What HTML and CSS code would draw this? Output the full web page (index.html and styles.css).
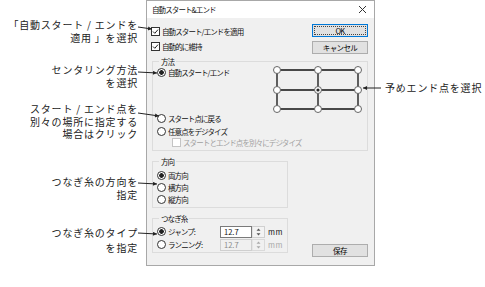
FILE: index.html
```html
<!DOCTYPE html>
<html lang="ja">
  <head>
    <meta charset="UTF-8" />
    <title>自動スタート&amp;エンド</title>
    <link rel="stylesheet" href="styles.css">
  </head>
  <body>
    <div class="figure">
      <p class="note note-apply">「自動スタート / エンドを<br />適用 」を選択</p>
      <p class="note note-method">センタリング方法<br />を選択</p>
      <p class="note note-split">スタート / エンド点を<br />別々の場所に指定する<br />場合はクリック</p>
      <p class="note note-dir">つなぎ糸の方向を<br />指定</p>
      <p class="note note-type">つなぎ糸のタイプ<br />を指定</p>
      <p class="note note-preset">予めエンド点を選択</p>

      <div class="dialog">
        <div class="titlebar">
          <span>自動スタート&amp;エンド</span>
          <svg class="close" width="9" height="9" viewBox="0 0 9 9">
            <path d="M1 1L8 8M8 1L1 8" stroke="#333" stroke-width="1" />
          </svg>
        </div>

        <div class="content">
          <div class="top">
            <div class="checks">
              <div class="row">
                <svg class="cb" width="9" height="9" viewBox="0 0 9 9"><rect x="0.5" y="0.5" width="8" height="8" fill="#fff" stroke="#333" /><path d="M2 4.5L3.8 6.3L7 2.6" fill="none" stroke="#222" stroke-width="1" /></svg>
                <span>自動スタート/エンドを適用</span>
              </div>
              <div class="row">
                <svg class="cb" width="9" height="9" viewBox="0 0 9 9"><rect x="0.5" y="0.5" width="8" height="8" fill="#fff" stroke="#333" /><path d="M2 4.5L3.8 6.3L7 2.6" fill="none" stroke="#222" stroke-width="1" /></svg>
                <span>自動的に維持</span>
              </div>
            </div>
            <div class="buttons">
              <button class="btn btn-default">OK</button>
              <button class="btn">キャンセル</button>
            </div>
          </div>

          <fieldset class="group group-method">
            <legend>方法</legend>
            <div class="method-top">
              <div class="row r-first"><span class="radio on"></span><span>自動スタート/エンド</span></div>
              <svg class="points" width="92" height="50" viewBox="0 0 92 50">
                <g stroke="#111" stroke-width="1.3">
                  <path d="M4 5H85M4 25H85M4 44H85" />
                  <path d="M4 5V44M45 5V44M85 5V44" />
                </g>
                <g fill="#fff" stroke="#666" stroke-width="1">
                  <circle cx="4" cy="5" r="3.5" />
                  <circle cx="45" cy="5" r="3.5" />
                  <circle cx="85" cy="5" r="3.5" />
                  <circle cx="4" cy="25" r="3.5" />
                  <circle cx="45" cy="25" r="3.5" />
                  <circle cx="85" cy="25" r="3.5" />
                  <circle cx="4" cy="44" r="3.5" />
                  <circle cx="45" cy="44" r="3.5" />
                  <circle cx="85" cy="44" r="3.5" />
                </g>
                <circle cx="45" cy="25" r="1.6" fill="#222" />
              </svg>
            </div>
            <div class="row r-back"><span class="radio"></span><span>スタート点に戻る</span></div>
            <div class="row r-any"><span class="radio"></span><span>任意点をデジタイズ</span></div>
            <div class="row r-sub disabled">
              <svg class="cb" width="9" height="9" viewBox="0 0 9 9"><rect x="0.5" y="0.5" width="8" height="8" fill="#fff" stroke="#c4c4c4" /></svg>
              <span>スタートとエンド点を別々にデジタイズ</span>
            </div>
          </fieldset>

          <div class="lower">
            <div class="lower-left">
              <fieldset class="group group-dir">
                <legend>方向</legend>
                <div class="row r-dir"><span class="radio on"></span><span>両方向</span></div>
                <div class="row r-dir"><span class="radio"></span><span>横方向</span></div>
                <div class="row r-dir"><span class="radio"></span><span>縦方向</span></div>
              </fieldset>

              <fieldset class="group group-type">
                <legend>つなぎ糸</legend>
                <div class="row r-type">
                  <span class="radio on"></span><span class="type-label">ジャンプ:</span>
                  <span class="num">12.7</span>
                  <svg class="spin" width="13" height="12" viewBox="0 0 13 12"><rect x="0" y="0.5" width="12.5" height="11" fill="#f3f3f3" stroke="#d0d0d0" /><path d="M6.5 2.5L8.5 4.8H4.5z M6.5 9.5L8.5 7.2H4.5z" fill="#555" /></svg>
                  <span class="unit">mm</span>
                </div>
                <div class="row r-type off">
                  <span class="radio"></span><span class="type-label">ランニング:</span>
                  <span class="num">12.7</span>
                  <svg class="spin" width="13" height="12" viewBox="0 0 13 12"><rect x="0" y="0.5" width="12.5" height="11" fill="#f0f0f0" stroke="#dadada" /><path d="M6.5 2.5L8.5 4.8H4.5z M6.5 9.5L8.5 7.2H4.5z" fill="#aaa" /></svg>
                  <span class="unit">mm</span>
                </div>
              </fieldset>
            </div>
            <button class="btn btn-save">保存</button>
          </div>
        </div>
      </div>

      <svg class="arrows" width="485" height="287" viewBox="0 0 485 287">
        <defs>
          <marker id="head" viewBox="0 0 6 6" refX="6" refY="3" markerWidth="5" markerHeight="4" orient="auto">
            <path d="M0 0L6 3L0 6z" fill="#222" />
          </marker>
        </defs>
        <g stroke="#222" stroke-width="1" marker-end="url(#head)">
          <path d="M138 27L152 29" />
          <path d="M138 72L157 73" />
          <path d="M138 113L159 116" />
          <path d="M138 183L157 184" />
          <path d="M138 233L157 234" />
          <path d="M381 88L363 88" />
        </g>
      </svg>
    </div>
  </body>
</html>
```

FILE: styles.css
```css
* {
  box-sizing: border-box;
}
body {
  margin: 0;
  background: #fff;
  font-family: "Noto Sans CJK JP", "Noto Sans", sans-serif;
}
.figure {
  position: relative;
  width: 485px;
  height: 287px;
}

/* callouts */
.note {
  position: absolute;
  margin: 0;
  font-size: 10px;
  line-height: 13px;
  letter-spacing: 0.8px;
  color: #222;
  white-space: nowrap;
}
.note-apply,
.note-method,
.note-split,
.note-dir,
.note-type {
  right: 347px;
  text-align: right;
}
.note-apply { top: 18px; }
.note-method { top: 63px; }
.note-split { top: 103px; line-height: 12.5px; }
.note-dir { top: 175px; }
.note-type { top: 225px; line-height: 15px; }
.note-preset {
  left: 385px;
  top: 81px;
}
.arrows {
  position: absolute;
  left: 0;
  top: 0;
  pointer-events: none;
}

/* dialog */
.dialog {
  margin-left: 146px;
  width: 229px;
  height: 266px;
  border: 1px solid #a8a8a8;
  background: #f0f0f0;
  font-size: 7.5px;
  letter-spacing: -0.9px;
  color: #111;
}
.titlebar {
  height: 17px;
  background: #fff;
  display: flex;
  align-items: center;
  justify-content: space-between;
  padding: 0 7px 0 5px;
}
.content {
  padding: 6px 6px 0 4px;
}
.top {
  display: flex;
  justify-content: space-between;
  height: 31px;
}
.row {
  display: flex;
  align-items: center;
  gap: 2px;
  white-space: nowrap;
}
.checks .row {
  height: 15px;
}
.buttons {
  display: flex;
  flex-direction: column;
  gap: 4px;
}
.btn {
  width: 56px;
  height: 13px;
  padding: 0;
  background: #e1e1e1;
  border: 1px solid #adadad;
  font-family: inherit;
  font-size: 7.5px;
  letter-spacing: -0.6px;
  line-height: 11px;
  color: #000;
}
.btn-default {
  border-color: #0078d7;
  outline: 1px dotted #444;
  outline-offset: -3px;
}

.radio {
  flex: none;
  width: 9px;
  height: 9px;
  border: 1px solid #333;
  border-radius: 50%;
  background: #fff;
}
.radio.on {
  background: radial-gradient(circle, #222 0 2px, #fff 2.6px);
}
.cb {
  flex: none;
}

.group {
  margin: 0 0 0 1px;
  padding: 0 2px 2px 4px;
  border: 1px solid #dcdcdc;
  min-width: 0;
}
.group legend {
  margin-left: 2px;
  padding: 0 2px;
  line-height: 9px;
}
.group-method {
  margin-top: 2px;
}
.method-top {
  display: flex;
  justify-content: space-between;
  align-items: flex-start;
  height: 45px;
}
.r-first { height: 13px; }
.points {
  margin-top: -1px;
}
.r-back { height: 14px; }
.r-any { height: 12px; }
.r-sub {
  height: 11px;
  padding-left: 15px;
}
.disabled {
  color: #a0a0a0;
}

.lower {
  display: flex;
  justify-content: space-between;
  align-items: flex-end;
}
.lower-left {
  width: 137px;
  padding-bottom: 5px;
}
.group-dir {
  margin-top: 6px;
  padding-top: 3px;
}
.r-dir { height: 12px; }
.group-type {
  margin-top: 6px;
  padding-top: 2px;
  padding-bottom: 1px;
}
.r-type {
  height: 13px;
  gap: 0;
}
.type-label {
  width: 54px;
  padding-left: 2px;
}
.num {
  width: 32px;
  height: 12px;
  border: 1px solid #7a7a7a;
  background: #fff;
  padding-left: 3px;
  line-height: 10px;
  letter-spacing: 0;
}
.spin {
  flex: none;
}
.unit {
  margin-left: 3px;
  letter-spacing: 0.5px;
}
.off .num {
  border-color: #cfcfcf;
  background: #f0f0f0;
  color: #8a8a8a;
}
.off .unit {
  color: #a8a8a8;
}
.btn-save {
  margin-bottom: 1px;
}
```
